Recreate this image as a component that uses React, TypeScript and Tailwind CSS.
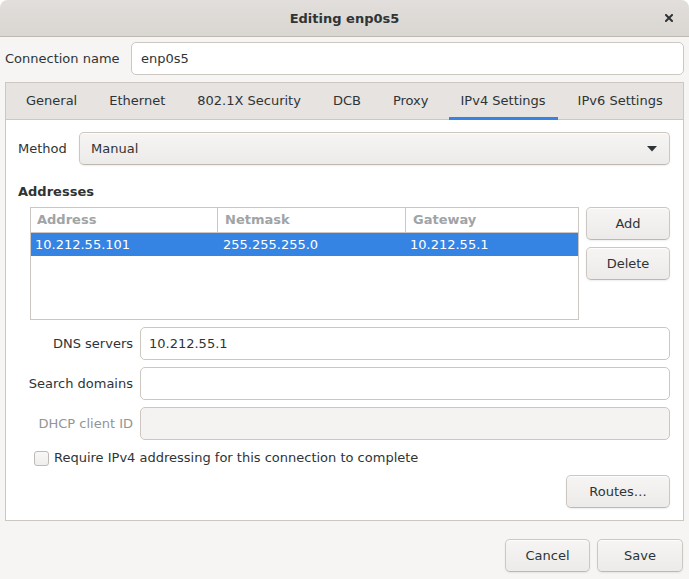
import React from "react";

const btnBase =
  "flex items-center rounded-[5px] border border-[#cdc7c2] border-b-[#bfb8b1] bg-gradient-to-b from-[#f6f5f4] to-[#edebe9] shadow-[inset_0_1px_rgba(255,255,255,0.8),0_1px_2px_rgba(0,0,0,0.07)] text-[#2e3436]";
const btn = btnBase + " justify-center";

function Entry({ value, disabled }: { value?: string; disabled?: boolean }) {
  return (
    <div
      className={
        "h-[33px] flex-1 rounded-[5px] border border-[#cdc7c2] flex items-center px-[8px] " +
        (disabled ? "bg-[#f4f3f2]" : "bg-white")
      }
    >
      {value}
    </div>
  );
}

export default function App() {
  const tabs = ["General", "Ethernet", "802.1X Security", "DCB", "Proxy", "IPv4 Settings", "IPv6 Settings"];
  return (
    <div
      className="w-[689px] h-[579px] bg-[#f6f5f4] text-[13px] text-[#2e3436] flex flex-col rounded-t-[8px] overflow-hidden"
      style={{ fontFamily: '"DejaVu Sans", sans-serif' }}
    >
      {/* Title bar */}
      <div className="relative h-[37px] shrink-0 border-b border-[#bfb8b1] bg-gradient-to-b from-[#e1dedb] to-[#dad6d2] flex items-center justify-center">
        <span className="font-bold mt-[1px]">Editing enp0s5</span>
        <svg className="absolute right-[16px] top-[14px]" width="8" height="8" viewBox="0 0 8 8">
          <path d="M1 1L7 7M7 1L1 7" stroke="#2e3436" strokeWidth="2" strokeLinecap="square" />
        </svg>
      </div>

      {/* Connection name */}
      <div className="mt-[5px] ml-[5px] mr-[5px] flex items-center h-[33px]">
        <span className="w-[126px] shrink-0">Connection name</span>
        <div className="h-[33px] flex-1 rounded-[5px] border border-[#cdc7c2] bg-white flex items-center px-[9px]">
          enp0s5
        </div>
      </div>

      {/* Notebook */}
      <div className="mt-[7px] mx-[5px] h-[439px] border border-[#cdc7c2] flex flex-col">
        <div className="h-[37px] shrink-0 bg-[#e6e3e0] border-b border-[#cdc7c2] flex items-stretch pl-[8px] gap-[8px]">
          {tabs.map((t) => (
            <div
              key={t}
              className={
                "px-[12px] flex items-center border-b-[3px] -mb-px pt-[1px] " +
                (t === "IPv4 Settings" ? "border-[#3584e4]" : "border-transparent")
              }
            >
              {t}
            </div>
          ))}
        </div>

        <div className="flex-1 bg-white pt-[12px] pl-[12px] pr-[13px] flex flex-col">
          {/* Method */}
          <div className="flex items-center h-[33px]">
            <span className="w-[61px] shrink-0">Method</span>
            <div className={btnBase + " flex-1 h-[33px] justify-between pl-[11px] pr-[12px]"}>
              <span>Manual</span>
              <svg width="10" height="6" viewBox="0 0 10 6">
                <path d="M0 0H10L5 5.5Z" fill="#2e3436" />
              </svg>
            </div>
          </div>

          <div className="mt-[19px] font-bold leading-[16px]">Addresses</div>

          {/* Table + buttons */}
          <div className="mt-[7px] ml-[12px] flex gap-[7px]">
            <div className="w-[549px] h-[113px] border border-[#cdc7c2] bg-white flex flex-col">
              <div className="h-[25px] border-b border-[#cdc7c2] flex text-[#a0a4a5] font-bold">
                <div className="w-[187px] border-r border-[#cdc7c2] flex items-center pl-[6px]">Address</div>
                <div className="w-[188px] border-r border-[#cdc7c2] flex items-center pl-[7px]">Netmask</div>
                <div className="flex-1 flex items-center pl-[7px]">Gateway</div>
              </div>
              <div className="h-[23px] bg-[#3584e4] text-white flex">
                <div className="w-[187px] flex items-center pl-[4px]">10.212.55.101</div>
                <div className="w-[188px] flex items-center pl-[5px]">255.255.255.0</div>
                <div className="flex-1 flex items-center pl-[4px]">10.212.55.1</div>
              </div>
            </div>
            <div className="flex flex-col gap-[7px]">
              <div className={btn + " w-[84px] h-[33px]"}>Add</div>
              <div className={btn + " w-[84px] h-[33px]"}>Delete</div>
            </div>
          </div>

          {/* DNS etc */}
          <div className="mt-[7px] flex flex-col gap-[7px]">
            <div className="flex items-center gap-[7px]">
              <span className="w-[115px] shrink-0 text-right whitespace-nowrap">DNS servers</span>
              <Entry value="10.212.55.1" />
            </div>
            <div className="flex items-center gap-[7px]">
              <span className="w-[115px] shrink-0 text-right whitespace-nowrap">Search domains</span>
              <Entry />
            </div>
            <div className="flex items-center gap-[7px]">
              <span className="w-[115px] shrink-0 text-right whitespace-nowrap text-[#929595]">DHCP client ID</span>
              <Entry disabled />
            </div>
          </div>

          <div className="mt-[9px] ml-[16px] flex items-center gap-[5px] h-[18px]">
            <div className="w-[15px] h-[15px] rounded-[3px] border border-[#c0bab5] bg-gradient-to-b from-[#f8f7f6] to-[#f0eeec]" />
            <span>Require IPv4 addressing for this connection to complete</span>
          </div>

          <div className="mt-[8px] flex justify-end">
            <div className={btn + " w-[104px] h-[33px]"}>Routes…</div>
          </div>
        </div>
      </div>

      {/* Footer */}
      <div className="mt-[18px] mr-[6px] flex justify-end gap-[7px]">
        <div className={btn + " w-[85px] h-[33px]"}>Cancel</div>
        <div className={btn + " w-[86px] h-[33px]"}>Save</div>
      </div>
    </div>
  );
}
